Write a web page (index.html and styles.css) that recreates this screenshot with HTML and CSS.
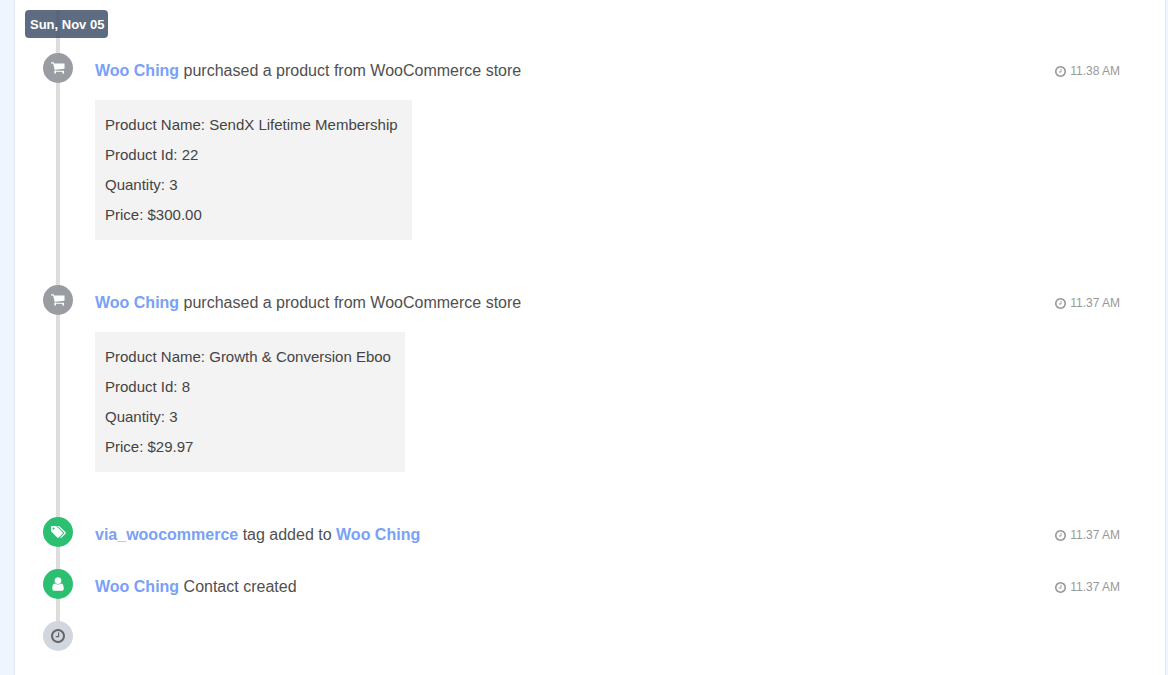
FILE: index.html
```html
<!DOCTYPE html>
<html lang="en">
  <head>
    <meta charset="UTF-8" />
    <meta name="viewport" content="width=device-width, initial-scale=1.0" />
    <title>Contact Activity</title>
    <link rel="stylesheet" href="styles.css">
  </head>
  <body>
    <!-- Icon shapes -->
    <svg class="icon-defs" aria-hidden="true">
      <symbol id="icon-cart" viewBox="0 0 14 12">
        <path d="M0 .3h2.700l.5 1.300h10.300v5.200l-9.300 1 .2.900h8.600v2.800h-1.600v-1.700h-6.400v1.700h-1.600v-2.600l.4-.7-1.700-6.700h-2.100z" />
      </symbol>
      <symbol id="icon-tags" viewBox="0 0 2048 1792">
        <path d="M576 448q0-53-37.500-90.500t-90.500-37.500-90.500 37.500-37.500 90.500 37.500 90.500 90.500 37.500 90.500-37.500 37.500-90.500zm1067 576q0 53-37 90l-491 492q-39 37-91 37-53 0-90-37l-715-716q-38-37-64.500-101t-26.500-117v-416q0-52 38-90t90-38h416q53 0 117 26.500t102 64.500l715 714q37 39 37 91zm384 0q0 53-37 90l-491 492q-39 37-91 37-36 0-59-14t-53-45l470-470q37-37 37-90 0-52-37-91l-715-714q-38-38-102-64.500t-117-26.500h224q53 0 117 26.500t102 64.500l715 714q37 39 37 91z" />
      </symbol>
      <symbol id="icon-user" viewBox="0 0 1792 1792">
        <path d="M1536 1399q0 109-62.500 187t-150.500 78h-854q-88 0-150.500-78t-62.500-187q0-85 8.500-160.500t31.500-152 58.500-131 94-89 134.500-34.500q131 128 313 128t313-128q76 0 134.500 34.500t94 89 58.500 131 31.500 152 8.500 160.500zm-256-887q0 159-112.500 271.500t-271.500 112.500-271.500-112.500-112.500-271.500 112.500-271.500 271.500-112.500 271.500 112.500 112.500 271.500z" />
      </symbol>
      <symbol id="icon-clock" viewBox="128 128 1536 1536">
        <path d="M1024 544v448q0 14-9 23t-23 9h-320q-14 0-23-9t-9-23v-64q0-14 9-23t23-9h224v-352q0-14 9-23t23-9h64q14 0 23 9t9 23zm416 352q0-148-73-273t-198-198-273-73-273 73-198 198-73 273 73 273 198 198 273 73 273-73 198-198 73-273zm224 0q0 209-103 385.500t-279.500 279.500-385.500 103-385.500-103-279.500-279.500-103-385.500 103-385.500 279.500-279.500 385.500-103 385.500 103 279.500 279.500 103 385.500z" />
      </symbol>
    </svg>

    <main class="panel">
      <div class="timeline">
        <h2 class="date-label">Sun, Nov 05</h2>

        <ul class="events">
          <li class="event">
            <span class="marker marker-order"><svg class="icon-cart"><use href="#icon-cart" /></svg></span>
            <div class="event-body">
              <div class="event-header">
                <p class="event-title"><a href="#">Woo Ching</a> purchased a product from WooCommerce store</p>
                <time class="event-time"><svg class="icon-small"><use href="#icon-clock" /></svg>11.38 AM</time>
              </div>
              <div class="details">
                <p>Product Name: SendX Lifetime Membership</p>
                <p>Product Id: 22</p>
                <p>Quantity: 3</p>
                <p>Price: $300.00</p>
              </div>
            </div>
          </li>

          <li class="event">
            <span class="marker marker-order"><svg class="icon-cart"><use href="#icon-cart" /></svg></span>
            <div class="event-body">
              <div class="event-header">
                <p class="event-title"><a href="#">Woo Ching</a> purchased a product from WooCommerce store</p>
                <time class="event-time"><svg class="icon-small"><use href="#icon-clock" /></svg>11.37 AM</time>
              </div>
              <div class="details">
                <p>Product Name: Growth &amp; Conversion Eboo</p>
                <p>Product Id: 8</p>
                <p>Quantity: 3</p>
                <p>Price: $29.97</p>
              </div>
            </div>
          </li>

          <li class="event">
            <span class="marker marker-contact"><svg class="icon-tags"><use href="#icon-tags" /></svg></span>
            <div class="event-body">
              <div class="event-header">
                <p class="event-title"><a href="#">via_woocommerce</a> tag added to <a href="#">Woo Ching</a></p>
                <time class="event-time"><svg class="icon-small"><use href="#icon-clock" /></svg>11.37 AM</time>
              </div>
            </div>
          </li>

          <li class="event">
            <span class="marker marker-contact"><svg class="icon-user"><use href="#icon-user" /></svg></span>
            <div class="event-body">
              <div class="event-header">
                <p class="event-title"><a href="#">Woo Ching</a> Contact created</p>
                <time class="event-time"><svg class="icon-small"><use href="#icon-clock" /></svg>11.37 AM</time>
              </div>
            </div>
          </li>

          <!-- End of the timeline -->
          <li class="event">
            <span class="marker marker-end"><svg class="icon-end"><use href="#icon-clock" /></svg></span>
          </li>
        </ul>
      </div>
    </main>
  </body>
</html>
```
FILE: styles.css
```css
* {
  box-sizing: border-box;
}
body {
  margin: 0;
  min-height: 100vh;
  padding: 0 2px 0 14px;
  display: flex;
  background-color: #eef5ff;
  color: #505050;
  font-family: "Liberation Sans", Arial, sans-serif;
  font-size: 16px;
}
h2,
p,
ul {
  margin: 0;
  padding: 0;
}
svg {
  fill: currentColor;
}
.icon-defs {
  position: absolute;
  width: 0;
  height: 0;
}
.panel {
  flex: 1;
  padding: 10px 45px 24px 10px;
  background-color: white;
  border-left: 1px solid #e1eaf8;
  border-right: 1px solid #e1eaf8;
}
.timeline {
  position: relative;
}
/* vertical line behind the markers */
.timeline::before {
  content: "";
  position: absolute;
  top: 0;
  bottom: 15px;
  left: 31px;
  width: 4px;
  background-color: #dddddd;
}
.date-label {
  position: relative;
  width: fit-content;
  padding: 1px 4px 0 5px;
  border-radius: 4px;
  background-color: rgba(65, 82, 107, 0.85);
  color: white;
  font-size: 13px;
  line-height: 27px;
}
.events {
  margin-top: 15px;
  padding-left: 18px;
  list-style: none;
  display: flex;
  flex-direction: column;
  gap: 16px;
}
.event {
  display: flex;
  align-items: flex-start;
  gap: 22px;
}
.marker {
  position: relative;
  flex: none;
  width: 30px;
  height: 30px;
  border-radius: 50%;
  display: flex;
  justify-content: center;
  align-items: center;
  color: white;
}
.marker-order {
  background-color: #999ca1;
}
.marker-contact {
  background-color: #2bbf71;
}
.marker-end {
  background-color: #d2d6df;
  color: #666666;
}
.icon-cart {
  width: 14px;
  height: 12px;
}
.icon-tags {
  width: 16px;
  height: 14px;
}
.icon-user {
  width: 16px;
  height: 16px;
}
.icon-end {
  width: 14px;
  height: 14px;
}
.event-body {
  flex: 1;
}
.event-header {
  display: flex;
  justify-content: space-between;
  line-height: 36px;
}
.event-title a {
  color: #78a1f7;
  font-weight: bold;
  text-decoration: none;
}
.event-time {
  display: flex;
  align-items: center;
  gap: 4px;
  color: #999999;
  font-size: 12px;
}
.icon-small {
  width: 11px;
  height: 11px;
}
.details {
  width: fit-content;
  margin: 11px 0 29px;
  padding: 10px 14px 10px 10px;
  background-color: #f3f3f3;
  color: #444444;
  font-size: 15px;
  line-height: 30px;
}
```
